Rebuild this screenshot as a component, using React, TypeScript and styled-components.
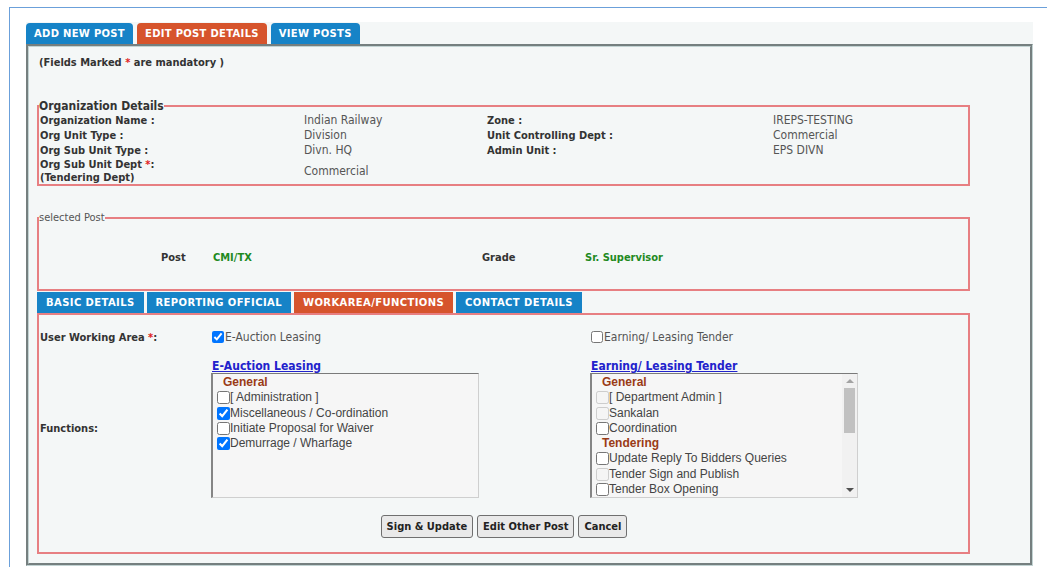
import styled, { createGlobalStyle } from 'styled-components'

const red = '#e77f82'
const tabBlue = '#1683c7'
const tabOrange = '#d6542c'
const panelBg = '#f4f7f7'
const verdana = `"DejaVu Sans Condensed", "DejaVu Sans", sans-serif`
const wide = `"DejaVu Sans", sans-serif`
const arial = `"Liberation Sans", Arial, sans-serif`

const GlobalStyle = createGlobalStyle`
  html, body {
    margin: 0;
    padding: 0;
    background: #fff;
    overflow: hidden;
  }
  body {
    font-family: ${verdana};
    font-size: 11px;
    color: #333;
  }
`

const Frame = styled.div`
  box-sizing: border-box;
  margin: 7px 0 0 9px;
  width: 1100px;
  height: 620px;
  border-top: 1px solid #6ba0da;
  border-left: 1px solid #6ba0da;
  padding: 14px 0 0 16px;
`

const Container = styled.div`
  width: 1007px;
  background: ${panelBg};
`

const TabBar = styled.div`
  display: flex;
  gap: 4px;
  padding-top: 1px;
`

const Tab = styled.div<{ $active?: boolean }>`
  height: 21px;
  line-height: 22px;
  padding: 0 8px;
  border-radius: 4px 4px 0 0;
  background: ${(p) => (p.$active ? tabOrange : tabBlue)};
  color: #fff;
  font-family: ${wide};
  font-size: 10px;
  font-weight: bold;
  letter-spacing: 0.3px;
`

const Panel = styled.div`
  box-sizing: border-box;
  height: 522px;
  border: 3px groove #c2d3d3;
  padding: 9px 0 0 8px;
  background: ${panelBg};
`

const Note = styled.div`
  line-height: 14px;
  font-weight: bold;
  padding-left: 2px;
`

const Star = styled.span`
  color: #e02020;
`

const FieldSet = styled.fieldset<{ $top: number }>`
  box-sizing: border-box;
  width: 933px;
  min-width: 0;
  margin: ${(p) => p.$top}px 0 0;
  padding: 0 0 0 1px;
  border: 2px solid ${red};
`

const Legend = styled.legend<{ $plain?: boolean }>`
  padding: 0;
  margin-left: -1px;
  font-size: ${(p) => (p.$plain ? 11 : 12)}px;
  line-height: ${(p) => (p.$plain ? 13 : 14)}px;
  font-weight: ${(p) => (p.$plain ? 'normal' : 'bold')};
  color: ${(p) => (p.$plain ? '#555' : '#333')};
`

const OrgGrid = styled.div`
  display: grid;
  grid-template-columns: 264px 183px 286px 1fr;
  align-items: center;
`

const Label = styled.div<{ $tall?: boolean }>`
  font-weight: bold;
  line-height: ${(p) => (p.$tall ? 13 : 15)}px;
  color: #333;
`

const Value = styled.div`
  font-size: 12px;
  line-height: 15px;
  color: #555;
`

const PostRow = styled.div`
  height: 65px;
  display: grid;
  grid-template-columns: 121px 52px 269px 103px 1fr;
  align-items: center;
  padding-top: 1px;
  box-sizing: border-box;
  font-weight: bold;
`

const Green = styled.span`
  color: #1f8a1f;
`

const SubTabs = styled.div`
  display: flex;
  gap: 3px;
  margin-top: 1px;
`

const SubTab = styled.div<{ $active?: boolean }>`
  height: 21px;
  line-height: 22px;
  padding: 0 9px;
  background: ${(p) => (p.$active ? tabOrange : tabBlue)};
  color: #fff;
  font-family: ${wide};
  font-size: 10px;
  font-weight: bold;
  letter-spacing: 0.4px;
`

const WorkBox = styled.div`
  box-sizing: border-box;
  width: 933px;
  height: 241px;
  border: 2px solid ${red};
  padding: 13px 0 0 1px;
`

const Row = styled.div<{ $gap?: number }>`
  display: grid;
  grid-template-columns: 172px 379px 1fr;
  align-items: center;
  margin-top: ${(p) => p.$gap ?? 0}px;
`

const CheckLabel = styled.label`
  display: flex;
  align-items: center;
  height: 18px;
  font-size: 12px;
  color: #555;
`

const SmallBox = styled.input`
  width: 12px;
  height: 12px;
  margin: 0 1px 0 0;
`

const Heading = styled.div`
  font-size: 12px;
  line-height: 14px;
  font-weight: bold;
  color: #2222cc;
  text-decoration: underline;
`

const ListBox = styled.div`
  box-sizing: border-box;
  width: 268px;
  height: 125px;
  margin-left: -1px;
  display: flex;
  overflow: hidden;
  background: #f6f6f6;
  border-top: 1px solid #7a7a7a;
  border-left: 2px solid #858585;
  border-right: 1px solid #cfcfcf;
  border-bottom: 1px solid #cfcfcf;
`

const Items = styled.div`
  flex: 1;
  padding-top: 1px;
  font-family: ${arial};
  font-size: 12px;
  line-height: 15.25px;
  color: #444;
`

const Group = styled.div`
  padding-left: 10px;
  font-weight: bold;
  color: #9a3b16;
`

const Item = styled.label`
  display: flex;
  align-items: center;
  height: 15.25px;
`

const ItemBox = styled.input`
  width: 13px;
  height: 13px;
  margin: 0 0 0 4px;
`

const Scrollbar = styled.div`
  width: 15px;
  display: flex;
  flex-direction: column;
  background: #f1f1f1;
`

const Arrow = styled.div<{ $down?: boolean }>`
  height: 14px;
  display: flex;
  align-items: center;
  justify-content: center;

  &::after {
    content: '';
    border-left: 4px solid transparent;
    border-right: 4px solid transparent;
    ${(p) =>
      p.$down ? 'border-top: 4px solid #505050;' : 'border-bottom: 4px solid #a3a3a3;'}
  }
`

const Track = styled.div`
  flex: 1;
  padding: 0 2px;
`

const Thumb = styled.div`
  height: 45px;
  background: #c1c1c1;
`

const Buttons = styled.div`
  display: flex;
  justify-content: center;
  gap: 4px;
  margin-top: 17px;
`

const Button = styled.button`
  height: 23px;
  padding: 0 5px;
  border: 1px solid #6f6f6f;
  border-radius: 3px;
  background: #e9e9e9;
  font-family: ${verdana};
  font-size: 11px;
  font-weight: bold;
  color: #222;
`

type Entry = { group?: string; text?: string; checked?: boolean; disabled?: boolean }

const auctionItems: Entry[] = [
  { group: 'General' },
  { text: '[ Administration ]' },
  { text: 'Miscellaneous / Co-ordination', checked: true },
  { text: 'Initiate Proposal for Waiver' },
  { text: 'Demurrage / Wharfage', checked: true },
]

const tenderItems: Entry[] = [
  { group: 'General' },
  { text: '[ Department Admin ]', disabled: true },
  { text: 'Sankalan', disabled: true },
  { text: 'Coordination' },
  { group: 'Tendering' },
  { text: 'Update Reply To Bidders Queries' },
  { text: 'Tender Sign and Publish', disabled: true },
  { text: 'Tender Box Opening' },
]

const FunctionList = ({ items, scroll }: { items: Entry[]; scroll?: boolean }) => (
  <ListBox>
    <Items>
      {items.map((e, i) =>
        e.group ? (
          <Group key={i}>{e.group}</Group>
        ) : (
          <Item key={i}>
            <ItemBox type="checkbox" defaultChecked={e.checked} disabled={e.disabled} />
            {e.text}
          </Item>
        )
      )}
    </Items>
    {scroll && (
      <Scrollbar>
        <Arrow />
        <Track>
          <Thumb />
        </Track>
        <Arrow $down />
      </Scrollbar>
    )}
  </ListBox>
)

export default function App() {
  return (
    <>
      <GlobalStyle />
      <Frame>
        <Container>
          <TabBar>
            <Tab>ADD NEW POST</Tab>
            <Tab $active>EDIT POST DETAILS</Tab>
            <Tab>VIEW POSTS</Tab>
          </TabBar>

          <Panel>
            <Note>
              (Fields Marked <Star>*</Star> are mandatory )
            </Note>

            <FieldSet $top={29}>
              <Legend>Organization Details</Legend>
              <OrgGrid>
                <Label>Organization Name :</Label>
                <Value>Indian Railway</Value>
                <Label>Zone :</Label>
                <Value>IREPS-TESTING</Value>

                <Label>Org Unit Type :</Label>
                <Value>Division</Value>
                <Label>Unit Controlling Dept :</Label>
                <Value>Commercial</Value>

                <Label>Org Sub Unit Type :</Label>
                <Value>Divn. HQ</Value>
                <Label>Admin Unit :</Label>
                <Value>EPS DIVN</Value>

                <Label $tall>
                  Org Sub Unit Dept <Star>*</Star>:
                  <br />
                  (Tendering Dept)
                </Label>
                <Value>Commercial</Value>
                <div />
                <div />
              </OrgGrid>
            </FieldSet>

            <FieldSet $top={25}>
              <Legend $plain>selected Post</Legend>
              <PostRow>
                <div />
                <span>Post</span>
                <Green>CMI/TX</Green>
                <span>Grade</span>
                <Green>Sr. Supervisor</Green>
              </PostRow>
            </FieldSet>

            <SubTabs>
              <SubTab>BASIC DETAILS</SubTab>
              <SubTab>REPORTING OFFICIAL</SubTab>
              <SubTab $active>WORKAREA/FUNCTIONS</SubTab>
              <SubTab>CONTACT DETAILS</SubTab>
            </SubTabs>

            <WorkBox>
              <Row>
                <Label>
                  User Working Area <Star>*</Star>:
                </Label>
                <CheckLabel>
                  <SmallBox type="checkbox" defaultChecked />
                  E-Auction Leasing
                </CheckLabel>
                <CheckLabel>
                  <SmallBox type="checkbox" />
                  Earning/ Leasing Tender
                </CheckLabel>
              </Row>

              <Row $gap={13}>
                <Label>Functions:</Label>
                <div>
                  <Heading>E-Auction Leasing</Heading>
                  <FunctionList items={auctionItems} />
                </div>
                <div>
                  <Heading>Earning/ Leasing Tender</Heading>
                  <FunctionList items={tenderItems} scroll />
                </div>
              </Row>

              <Buttons>
                <Button>Sign &amp; Update</Button>
                <Button>Edit Other Post</Button>
                <Button>Cancel</Button>
              </Buttons>
            </WorkBox>
          </Panel>
        </Container>
      </Frame>
    </>
  )
}
